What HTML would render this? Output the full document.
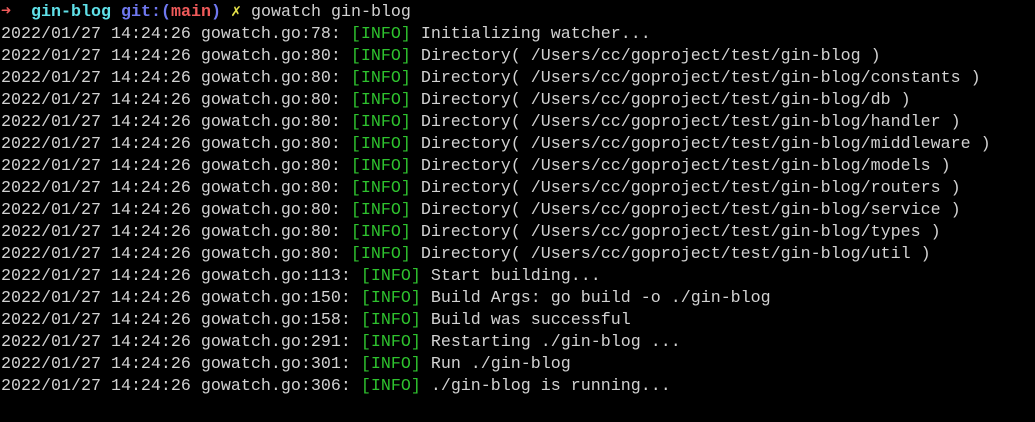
<!DOCTYPE html>
<html><head><meta charset="utf-8"><style>
html,body{margin:0;padding:0;background:#000;width:1035px;height:422px;overflow:hidden}
pre{margin:0;padding:2px 0 0 1px;font-family:"Liberation Mono","DejaVu Sans Mono",monospace;font-size:16.67px;line-height:22px;color:#d2d2d2;white-space:pre}
.g{color:#2ec22e}.c{color:#5fe0e8;font-weight:bold}.b{color:#6f78f0;font-weight:bold}.r{color:#ef5a5a;font-weight:bold}.y{color:#e8e44a;font-weight:bold}.a{color:#ef5a5a;font-weight:bold}
</style></head><body><pre><span class="a">➜</span>  <span class="c">gin-blog</span> <span class="b">git:(</span><span class="r">main</span><span class="b">)</span> <span class="y">✗</span> gowatch gin-blog
2022/01/27 14:24:26 gowatch.go:78: <span class="g">[INFO]</span> Initializing watcher...
2022/01/27 14:24:26 gowatch.go:80: <span class="g">[INFO]</span> Directory( /Users/cc/goproject/test/gin-blog )
2022/01/27 14:24:26 gowatch.go:80: <span class="g">[INFO]</span> Directory( /Users/cc/goproject/test/gin-blog/constants )
2022/01/27 14:24:26 gowatch.go:80: <span class="g">[INFO]</span> Directory( /Users/cc/goproject/test/gin-blog/db )
2022/01/27 14:24:26 gowatch.go:80: <span class="g">[INFO]</span> Directory( /Users/cc/goproject/test/gin-blog/handler )
2022/01/27 14:24:26 gowatch.go:80: <span class="g">[INFO]</span> Directory( /Users/cc/goproject/test/gin-blog/middleware )
2022/01/27 14:24:26 gowatch.go:80: <span class="g">[INFO]</span> Directory( /Users/cc/goproject/test/gin-blog/models )
2022/01/27 14:24:26 gowatch.go:80: <span class="g">[INFO]</span> Directory( /Users/cc/goproject/test/gin-blog/routers )
2022/01/27 14:24:26 gowatch.go:80: <span class="g">[INFO]</span> Directory( /Users/cc/goproject/test/gin-blog/service )
2022/01/27 14:24:26 gowatch.go:80: <span class="g">[INFO]</span> Directory( /Users/cc/goproject/test/gin-blog/types )
2022/01/27 14:24:26 gowatch.go:80: <span class="g">[INFO]</span> Directory( /Users/cc/goproject/test/gin-blog/util )
2022/01/27 14:24:26 gowatch.go:113: <span class="g">[INFO]</span> Start building...
2022/01/27 14:24:26 gowatch.go:150: <span class="g">[INFO]</span> Build Args: go build -o ./gin-blog
2022/01/27 14:24:26 gowatch.go:158: <span class="g">[INFO]</span> Build was successful
2022/01/27 14:24:26 gowatch.go:291: <span class="g">[INFO]</span> Restarting ./gin-blog ...
2022/01/27 14:24:26 gowatch.go:301: <span class="g">[INFO]</span> Run ./gin-blog
2022/01/27 14:24:26 gowatch.go:306: <span class="g">[INFO]</span> ./gin-blog is running...
</pre></body></html>
